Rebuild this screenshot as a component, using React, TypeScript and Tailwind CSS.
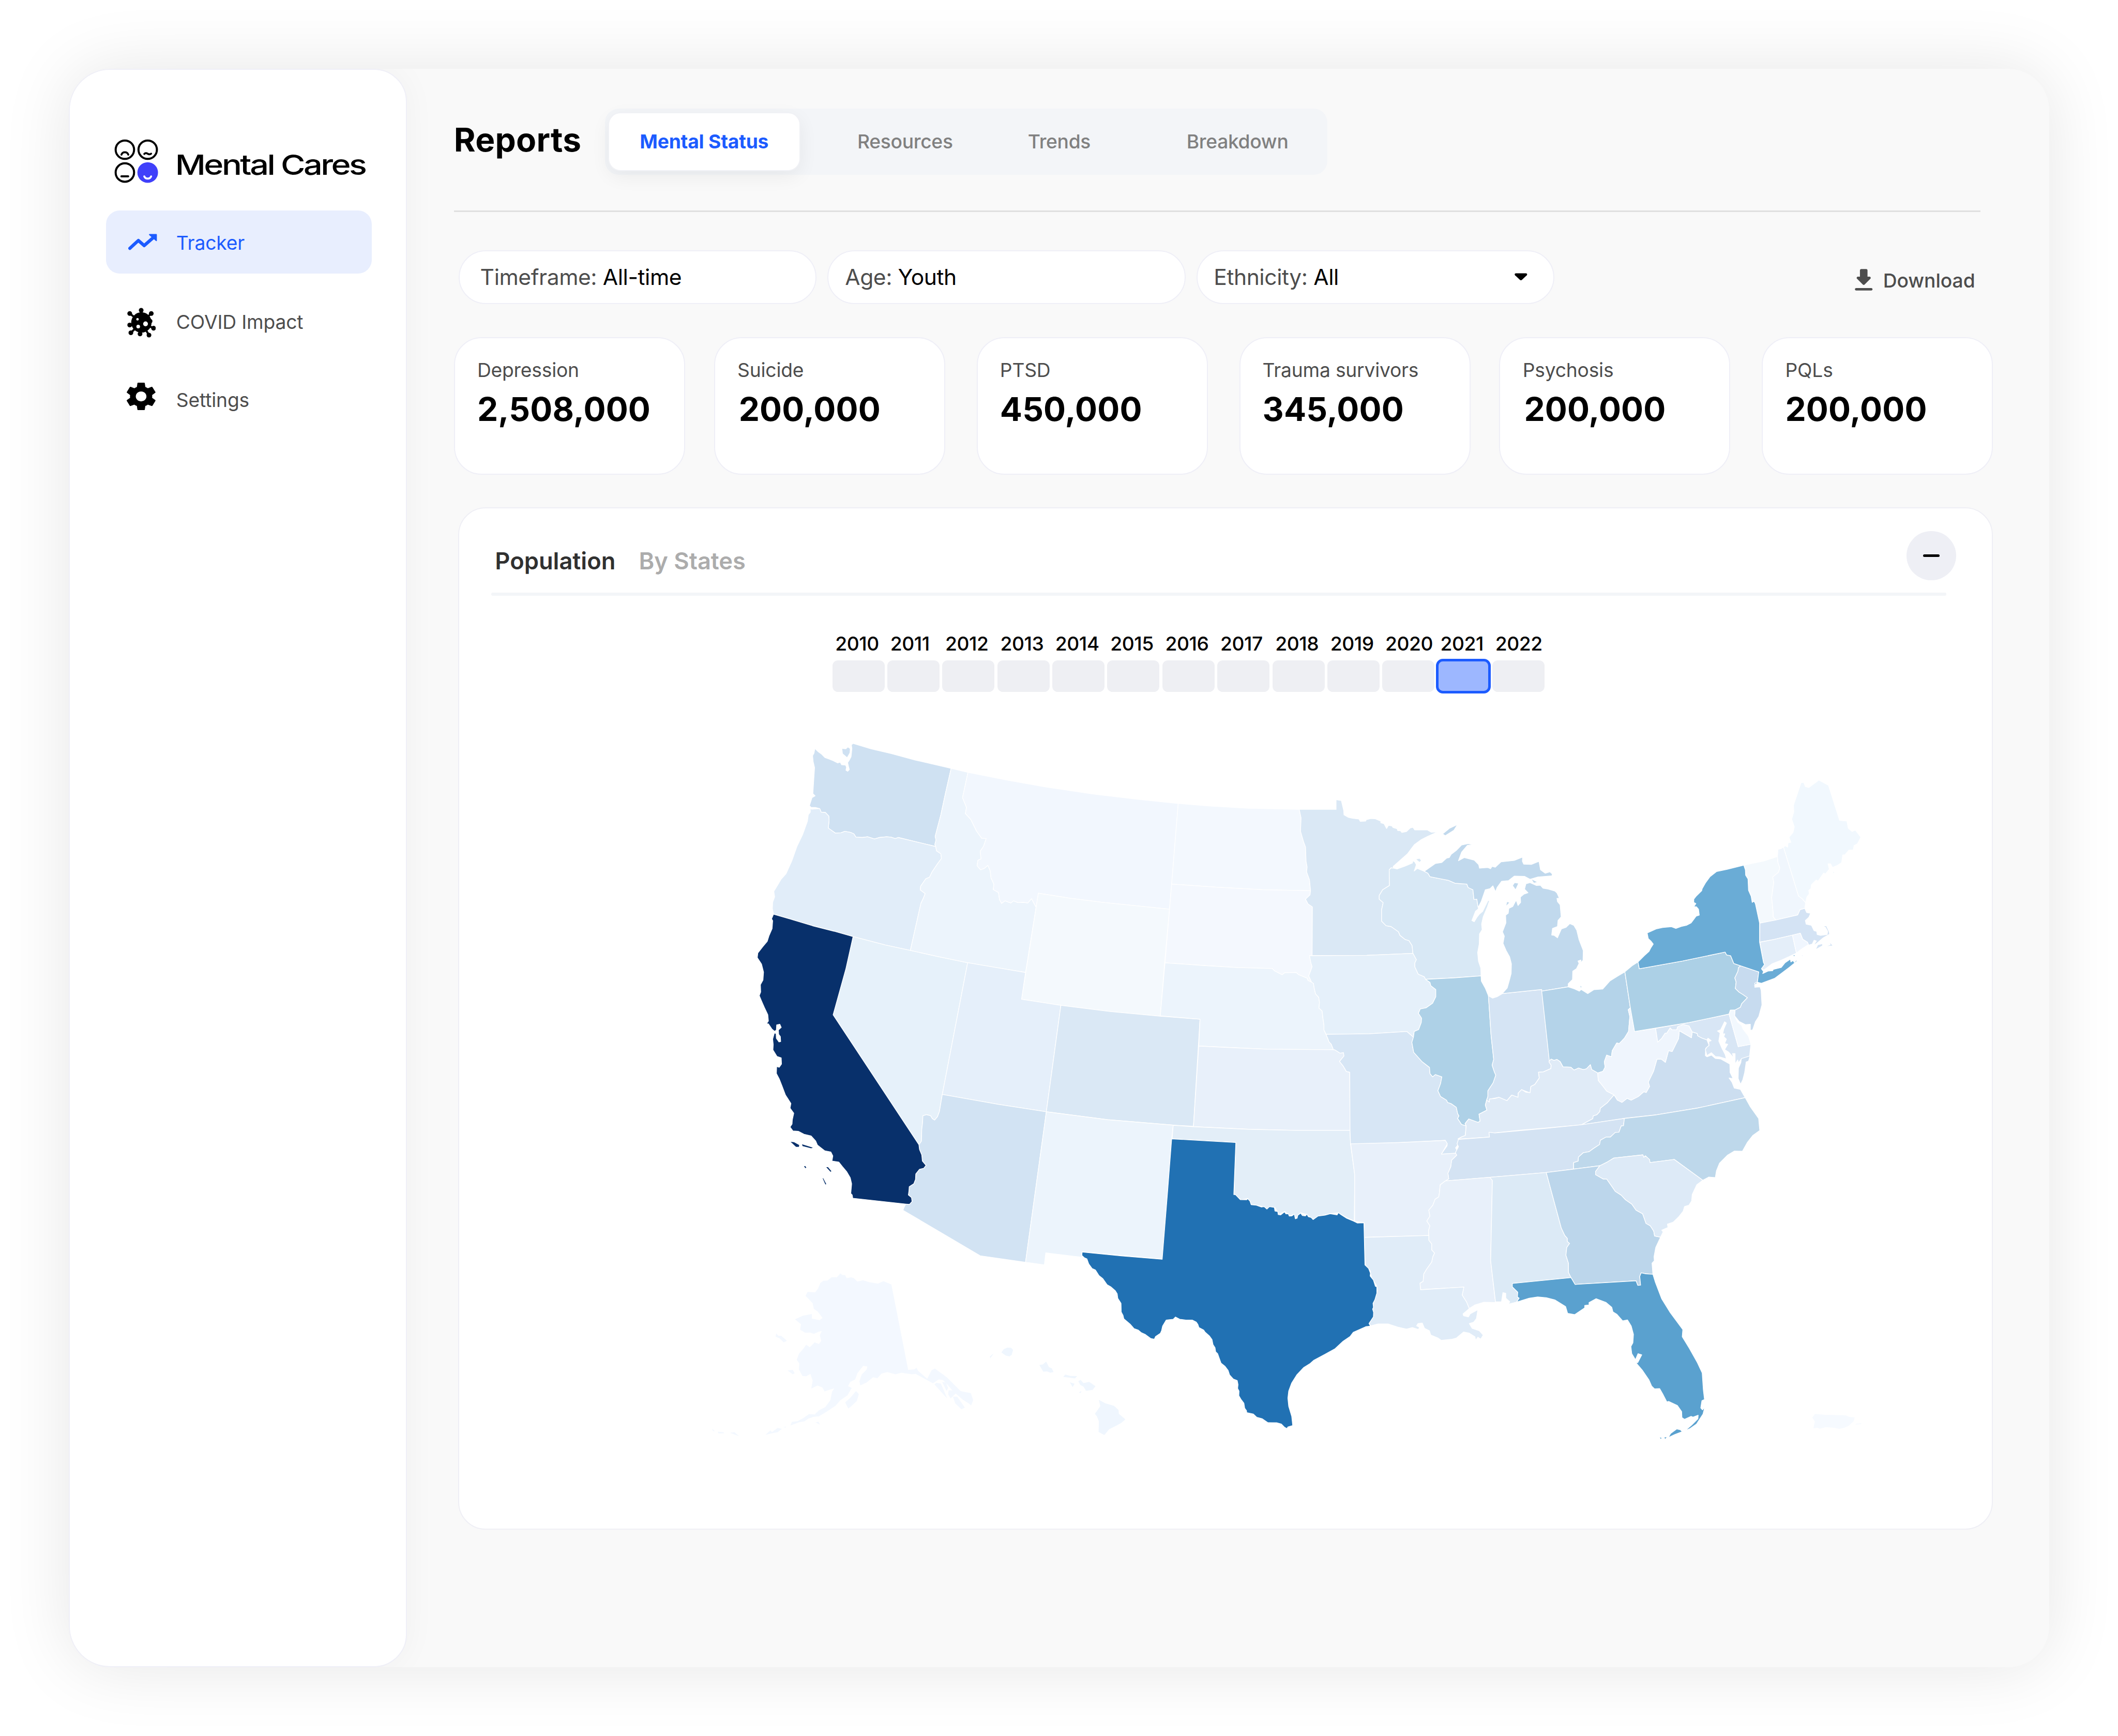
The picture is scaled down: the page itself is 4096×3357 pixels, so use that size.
import React from "react";

type Shape = { fill: string; points: string[] };
type Sheet = { transform: string; shapes: Shape[] };

const reverse = (s: string) => s.trim().split(/\s+/).reverse().join(" ");

/* Shared borders, western sheet */
const waOr =
  "270,238 275,248 290,249 302,259 303,270 300,292 325,306 345,305 358,301 378,304 390,308 397,317 420,318 438,316 462,322 480,318 505,316 520,317 535,321 545,318 677,343";
const orId =
  "677,343 680,355 695,363 697,376 682,392 665,412 655,428 642,432 624,453 623,463 640,473 634,485 625,500 588,630";
const idMt =
  "790,138 771,208 785,235 781,252 800,268 820,300 838,320 854,321 845,342 833,356 836,377 825,381 822,396 834,407 846,404 860,395 868,410 871,430 881,447 879,462 897,470 901,490 908,500 920,493 940,499 950,493 965,498 985,497 1000,499 1013,487 1029,511";
const nvAz =
  "700,1028 690,1075 683,1090 673,1099 665,1095 659,1087 645,1084 632,1087 631,1105 628,1125 627,1157 618,1167";
const caAz =
  "618,1167 620,1180 628,1195 630,1212 643,1224 635,1232 620,1235 607,1248 606,1263 600,1275 584,1283 583,1295 581,1306 592,1313 594,1324 585,1332 572,1331";

/* Shared borders, central sheet */
const ndMn =
  "573,88 580,118 578,165 590,203 597,220 599,270 603,290 601,307 612,335 616,373";
const sdMn = "616,373 614,388 597,403 606,419 623,430 622,601";
const sdNe =
  "63,626 200,635 340,643 470,646 480,655 495,662 508,668 518,661 561,660 571,668 590,675 603,680 606,688 620,694";
const neIa =
  "620,694 627,698 630,715 635,735 647,747 650,765 648,785 660,795 663,820 667,845 667,862 675,877";
const sdIa = "612,601 617,625 622,640 614,660 609,672 620,694";
const mnWi =
  "915,300 916,355 890,370 877,390 877,403 892,415 886,440 886,480 903,496 922,499 950,517 956,530 975,544 990,548 1002,566 1005,593";
const iaWi = "1005,593 1018,615 1012,627 1012,640 1025,666 1048,675 1053,684";
const iaIl =
  "1053,684 1070,695 1073,706 1092,720 1092,745 1080,768 1055,784 1033,788 1026,803 1038,820 1037,835 1027,860 1010,867 1007,887";
const moIl =
  "1007,887 1001,905 1008,940 1040,973 1068,993 1070,1015 1080,1026 1090,1018 1115,1026 1110,1050 1100,1075 1110,1095 1133,1108 1137,1116 1150,1120 1170,1133 1175,1155 1180,1163 1175,1172 1190,1193 1207,1198";
const ilIn =
  "1292,742 1302,880 1312,965 1306,985 1315,1010 1320,1020 1310,1047 1290,1075 1290,1095 1285,1108";
const ksMo = "708,931 728,943 741,941 743,953 726,972 740,988 752,1007 765,1010 766,1214";
const wiUp =
  "1048,305 1062,312 1070,324 1140,337 1165,347 1210,350 1215,362 1233,370 1237,404 1248,403 1252,427";

/* Shared borders, north-eastern sheet */
const ohKy =
  "269,1232 276,1225 287,1230 298,1226 310,1235 321,1257 350,1258 363,1270 380,1262 398,1268 410,1265 425,1248 430,1268 453,1282";
const ohWv =
  "453,1282 473,1275 481,1258 478,1235 487,1208 505,1215 508,1190 525,1158 535,1160 555,1137 570,1110 575,1048 569,1020 577,1012";
const wvKy = "453,1282 455,1313 470,1333 487,1357 515,1373";
const vaKy = "515,1373 490,1405 463,1428 461,1442 450,1455 436,1460 434,1472 391,1497";
const vaWv =
  "515,1373 528,1395 545,1404 565,1387 580,1395 607,1380 628,1360 637,1363 650,1338 645,1320 665,1275 678,1225 695,1225 710,1238 722,1190 736,1193 760,1140 763,1107 809,1136 812,1112";
const mdWv =
  "812,1112 800,1087 778,1081 757,1090 753,1103 735,1103 728,1095 715,1117 709,1117 695,1140 681,1154 673,1097";
const paNj =
  "996,838 988,845 986,860 974,888 979,905 976,932 990,947 1005,957 1022,970 1000,995 995,1010 975,1021";
const nyPa = "606,822 611,850 775,818 937,781 943,793 958,796 970,828 996,838";
const nyVt = "1008,421 1014,440 1015,462 1024,478 1026,525 1036,550 1040,575 1047,570 1052,580 1068,661";
const vtNh =
  "1136,385 1138,410 1145,432 1140,450 1118,470 1122,492 1114,555 1120,620 1120,635 1130,648";
const nhMe = "1159,346 1216,548 1230,560 1243,576";

/* Shared borders, south-eastern sheet */
const tnNc =
  "994,145 991,175 983,176 975,202 962,203 945,222 930,222 910,235 907,253 885,270 870,283 850,287 833,305 832,322 816,328 816,355";
const ncSc =
  "908,341 935,325 957,309 1059,296 1062,306 1068,300 1082,315 1084,328 1169,315 1269,401";
const gaSc =
  "908,341 893,365 893,378 920,396 932,396 945,418 962,447 983,463 998,482 1020,500 1035,525 1058,540 1070,580 1085,590 1097,612 1100,632 1121,637";
const gaAl =
  "720,369 773,600 785,630 794,642 794,655 802,663 792,680 789,712 798,745 798,783 807,805";
const gaFl = "807,805 821,833 1035,818 1041,837 1051,836 1048,800 1053,785 1070,789 1094,791";
const river =
  "366,404 348,420 345,455 343,470 330,480 322,505 308,525 312,550 301,570 312,590 307,610 308,630";
const msLa =
  "308,630 308,650 318,665 318,690 328,703 322,718 318,740 300,770 290,790 288,820 277,828 279,855 431,844 425,877 440,905 450,933";
const tnAr = "402,289 406,297 388,318 385,345 375,372 378,395 366,404";

const sheets: Sheet[] = [
  {
    transform: "translate(2160 2100) scale(0.82908 1.0523)",
    shapes: [
      {
        fill: "#cfe1f2",
        points: [
          `253,72 265,81 277,88 288,97 302,101 318,106 333,112 342,110 347,117 361,118 364,124 362,132 368,135 374,130 371,122 368,111 374,104 380,95 382,80 383,72 381,62 387,58 450,73 520,86 605,104 731,127 710,200 695,255 675,315 678,325 674,337 ${reverse(waOr)} 255,235 240,235 234,230 243,208 254,203 246,197 249,160 252,125 247,108 245,92 250,85`,
          "349,73 362,74 369,69 376,73 375,84 366,96 351,86",
        ],
      },
      {
        fill: "#e1edf9",
        points: [
          `237,237 242,240 ${waOr} ${orId} 500,615 387,592 320,577 245,562 165,543 108,530 104,515 105,497 112,482 109,467 122,450 134,434 152,418 172,383 190,343 210,310 227,273 230,255 237,248`,
        ],
      },
      {
        fill: "#e6f1fa",
        points: [`387,592 500,615 588,630 690,648 789,664 ${nvAz} 317,808`],
      },
      {
        fill: "#ecf4fc",
        points: [
          `731,127 ${idMt} 992,691 890,678 789,664 690,648 ${reverse(orId)} 674,337 678,325 675,315 695,255 710,200`,
        ],
      },
      {
        fill: "#f2f7fe",
        points: [
          `790,138 930,160 1060,178 1230,198 1380,212 1528,224 1505,447 1497,516 1270,498 1150,486 1037,472 ${reverse(idMt)}`,
        ],
      },
      {
        fill: "#f4f9fd",
        points: ["1037,472 1150,486 1270,498 1497,516 1480,663 1465,812 1290,799 1116,782 978,765"],
      },
      { fill: "#e5effa", points: ["789,664 992,691 978,765 1116,782 1065,1076 900,1056 700,1028"] },
      {
        fill: "#dae8f5",
        points: ["1116,782 1290,799 1465,812 1604,820 1581,1116 1510,1113 1280,1098 1065,1076"],
      },
      {
        fill: "#d2e3f3",
        points: [
          `700,1028 900,1056 1065,1076 992,1492 833,1474 700,1412 562,1348 566,1340 ${reverse(caAz)} ${reverse(nvAz)}`,
        ],
      },
      {
        fill: "#ecf4fc",
        points: ["1065,1076 1280,1098 1510,1113 1505,1150 1472,1483 1190,1463 1190,1478 1063,1466 1058,1499 992,1492"],
      },
      {
        fill: "#08306b",
        points: [
          `108,530 165,543 245,562 320,577 387,592 362,680 317,808 ${caAz} 386,1315 384,1306 379,1302 382,1275 377,1258 365,1242 350,1228 337,1215 313,1212 316,1198 309,1187 288,1184 262,1168 256,1157 240,1143 215,1138 195,1130 176,1129 166,1118 173,1110 174,1098 179,1080 166,1066 169,1053 150,1030 138,1005 128,985 118,970 119,951 128,953 136,944 135,927 120,923 106,905 107,890 105,875 111,858 117,860 118,873 127,883 133,882 132,868 126,862 125,850 135,843 130,834 119,836 118,850 112,854 102,847 90,833 83,833 90,825 88,808 76,788 66,770 58,755 63,745 62,725 71,712 73,690 66,668 51,650 53,637 70,620 86,605 92,590 103,570 105,548 101,543`,
          "168,1159 180,1160 198,1168 197,1173 187,1173",
          "208,1166 246,1175 240,1177 210,1171",
          "215,1227 219,1226 223,1230 220,1232",
          "293,1229 299,1229 311,1240 308,1242",
          "280,1259 283,1261 293,1276 290,1277",
        ],
      },
    ],
  },
  {
    transform: "translate(3340 2280) scale(0.76531 0.82908)",
    shapes: [
      { fill: "#f3f8fe", points: [`113,67 230,76 380,84 ${ndMn} 440,370 260,361 88,350`] },
      {
        fill: "#f4f8fe",
        points: [`88,350 260,361 440,370 ${sdMn} ${sdIa} ${reverse(sdNe)}`],
      },
      {
        fill: "#ecf4fc",
        points: [
          `${sdNe} ${neIa} 683,895 686,903 695,912 703,931 450,929 300,923 191,918 196,824 45,812`,
        ],
      },
      {
        fill: "#e8f0fa",
        points: [`191,918 300,923 450,929 ${ksMo} 560,1214 380,1210 171,1201`],
      },
      {
        fill: "#e3eef8",
        points: [
          "94,1196 171,1201 380,1210 560,1214 766,1214 768,1262 784,1370 782,1532 755,1521 721,1503 690,1506 650,1515 624,1526 600,1508 578,1503 560,1524 553,1508 537,1514 518,1498 495,1509 481,1484 450,1490 430,1480 390,1474 378,1453 352,1457 325,1439 332,1256 90,1244",
        ],
      },
      {
        fill: "#dae8f5",
        points: [
          `${ndMn} ${sdMn} 830,600 ${reverse(mnWi)} 922,293 932,297 930,288 985,243 1010,212 1035,195 1060,183 1098,167 1075,168 1060,160 1012,160 1005,151 995,153 980,166 963,169 958,163 947,162 945,156 930,152 925,146 912,144 905,155 895,138 883,135 883,129 862,121 845,120 828,124 825,129 805,130 800,122 775,119 760,116 743,107 742,92 733,57 713,54 713,88`,
        ],
      },
      {
        fill: "#d8e8f5",
        points: [
          `${mnWi} ${iaWi} 1160,679 1264,672 1263,645 1254,620 1251,590 1257,560 1258,525 1268,510 1266,490 1272,465 1288,430 1297,406 1290,408 1270,446 1258,455 1250,464 1238,482 1229,478 1243,445 1254,437 ${reverse(wiUp)} 1022,295 1010,304 1018,282 1012,272 1005,268 1003,276 975,287 945,297 932,294 922,293`,
          "1018,263 1030,261 1036,267 1030,272",
        ],
      },
      {
        fill: "#e5f0fa",
        points: [`${reverse(sdIa)} 830,600 ${iaWi} ${iaIl} 982,867 840,875 ${reverse(neIa)}`],
      },
      {
        fill: "#d7e6f5",
        points: [
          `675,877 840,875 982,867 ${moIl} 1204,1232 1190,1237 1177,1243 1180,1260 1167,1275 1173,1284 1167,1295 1113,1297 1135,1268 1135,1260 1128,1249 960,1257 768,1262 ${reverse(ksMo)} 703,931 695,912 686,903 683,895`,
        ],
      },
      {
        fill: "#aed1e7",
        points: [
          `1053,684 1160,679 1264,672 1265,690 1280,715 ${ilIn} 1280,1125 1286,1143 1256,1157 1260,1182 1252,1186 1217,1174 1203,1190 ${reverse(moIl)} ${reverse(iaIl)}`,
        ],
      },
      {
        fill: "#d5e4f4",
        points: [
          `${ilIn} 1295,1115 1296,1104 1332,1098 1362,1110 1380,1090 1404,1098 1405,1083 1418,1071 1450,1082 1453,1060 1468,1053 1485,1030 1482,1010 1500,1009 1529,997 1530,985 1522,973 1524,968 1510,850 1495,720 1345,734 1325,745 1308,750`,
        ],
      },
      {
        fill: "#c1d9ed",
        points: [
          `${wiUp} 1254,430 1265,410 1280,370 1298,366 1309,356 1319,377 1325,362 1342,340 1368,338 1390,322 1430,323 1450,333 1480,325 1533,321 1535,315 1526,307 1508,312 1490,300 1484,270 1455,281 1426,280 1421,270 1422,255 1390,267 1340,272 1318,291 1306,288 1300,296 1290,292 1258,294 1255,282 1238,266 1200,257 1178,268 1190,238 1212,214 1235,212 1215,208 1190,213 1170,232 1150,246 1143,257 1133,259 1115,274 1090,278`,
          "1120,174 1145,155 1171,144 1160,160 1128,179",
          "1385,355 1392,346 1405,348 1395,368",
          "1360,425 1363,413 1371,415",
          "1457,334 1476,343 1465,345",
        ],
      },
    ],
  },
  {
    transform: "translate(4300 2220) scale(0.76531 0.70153)",
    shapes: [
      {
        fill: "#c1d9ed",
        points: [
          "90,953 109,930 118,895 124,870 125,830 118,800 105,775 93,745 98,715 91,697 104,660 103,628 113,620 115,600 130,592 143,565 150,588 160,575 159,553 172,541 188,535 175,520 180,498 195,493 220,505 235,504 245,516 265,520 290,528 298,536 307,558 298,558 300,572 310,585 314,635 302,650 300,675 281,683 278,710 288,712 300,722 315,685 333,678 347,663 362,670 373,690 382,730 398,775 397,815 388,825 389,814 378,818 382,828 372,850 358,860 357,895 341,912 341,925 240,943 240,936",
        ],
      },
      {
        fill: "#b4d3e9",
        points: [
          `240,943 341,925 365,934 383,943 390,936 415,953 438,937 472,934 500,900 530,880 556,863 ${reverse(ohWv)} ${reverse(ohKy)} 255,1090`,
          "387,921 391,924 389,929",
        ],
      },
      {
        fill: "#e0ebf7",
        points: [
          `${ohKy} ${wvKy} ${vaKy} 270,1509 160,1519 57,1531 40,1528 42,1548 -77,1556 -64,1547 -50,1541 -47,1501 -51,1492 -37,1473 -2,1487 6,1482 2,1453 32,1436 26,1415 31,1395 41,1403 42,1390 62,1388 78,1383 108,1397 126,1374 150,1383 151,1365 164,1351 180,1362 196,1364 199,1338 214,1330 231,1303 228,1279 246,1278 275,1264 276,1250 268,1237`,
        ],
      },
      {
        fill: "#ccdef0",
        points: [
          `${vaWv} 831,1118 833,1128 848,1137 868,1145 876,1168 863,1180 862,1210 868,1215 885,1208 900,1222 920,1224 955,1245 956,1280 967,1305 952,1303 963,1320 972,1345 995,1350 1013,1384 850,1424 680,1455 555,1470 530,1475 391,1497 ${reverse(vaKy)}`,
          "1000,1222 1030,1212 1025,1232 1016,1235 1010,1280 1003,1310 996,1326 988,1305 989,1262 998,1240",
        ],
      },
      {
        fill: "#eff5fd",
        points: [`577,1012 593,1110 673,1097 ${reverse(mdWv)} ${reverse(vaWv)} ${reverse(wvKy)} ${ohWv}`],
      },
      {
        fill: "#d8e6f5",
        points: [
          `673,1097 800,1073 952,1038 987,1173 1035,1163 1030,1212 1000,1222 988,1240 985,1228 975,1245 975,1202 965,1202 970,1220 950,1195 935,1185 947,1163 935,1160 942,1142 932,1132 936,1120 928,1120 932,1100 942,1075 935,1070 920,1103 908,1108 918,1116 913,1150 925,1180 937,1205 942,1224 915,1215 900,1214 885,1198 868,1210 862,1185 868,1175 876,1168 875,1152 884,1148 872,1138 868,1145 848,1137 833,1128 831,1118 ${mdWv}`,
        ],
      },
      {
        fill: "#acd0e6",
        points: [`556,863 583,838 ${nyPa} ${paNj} 957,1022 952,1038 800,1073 593,1110 577,1012`],
      },
      {
        fill: "#c7dbef",
        points: [
          `1065,863 1060,905 1050,910 1050,927 1070,925 1074,940 1077,1000 1065,1048 1052,1070 1042,1103 1033,1106 1033,1080 1015,1082 990,1068 973,1045 ${reverse(paNj)}`,
        ],
      },
      {
        fill: "#f2f8fe",
        points: ["952,1038 957,1022 975,1021 973,1045 985,1072 1000,1085 1005,1100 1026,1130 1035,1163 987,1173"],
      },
      { fill: "#f4f9fd", points: [`${nyVt} ${reverse(vtNh)} 1085,403`] },
      {
        fill: "#f0f6fd",
        points: [`${vtNh} 1213,627 1222,605 1240,600 ${reverse(nhMe)} 1148,353 1138,355`],
      },
      {
        fill: "#f1f8fe",
        points: [
          `${nhMe} 1248,552 1257,540 1255,525 1263,518 1265,502 1283,482 1290,487 1312,453 1318,458 1333,437 1328,415 1338,415 1345,430 1363,422 1380,410 1384,378 1392,378 1408,358 1424,357 1427,340 1440,332 1453,305 1432,275 1420,281 1405,268 1400,238 1372,235 1330,90 1293,68 1285,75 1255,99 1242,95 1236,78 1226,78 1197,172 1198,200 1190,230 1200,262 1195,285 1180,305 1187,326 1176,328 1175,346 1165,340`,
          "1347,450 1351,448 1350,455",
        ],
      },
      {
        fill: "#d4e3f4",
        points: [
          "1069,661 1130,648 1213,627 1222,605 1240,600 1247,617 1262,620 1255,637 1242,650 1245,665 1265,670 1275,692 1285,695 1287,708 1300,712 1325,708 1327,695 1318,678 1307,672 1322,672 1332,695 1337,722 1332,708 1310,722 1285,745 1272,755 1284,735 1275,732 1268,748 1254,752 1250,740 1232,728 1223,703 1193,711 1125,728 1068,740",
          "1283,768 1290,752 1306,748 1306,754",
          "1325,756 1338,752 1336,744 1345,754",
        ],
      },
      {
        fill: "#e4eef9",
        points: ["1069,740 1117,730 1193,711 1208,785 1180,800 1150,815 1115,830 1085,855 1075,850 1087,832 1083,825"],
      },
      {
        fill: "#f0f6fe",
        points: [
          "1193,711 1223,703 1232,728 1250,740 1254,750 1235,763 1225,770 1208,785",
          "1228,794 1232,793 1232,799",
        ],
      },
      {
        fill: "#6aacd6",
        points: [
          `${nyPa} 1065,863 1060,905 1052,908 1049,921 1060,906 1075,910 1100,900 1125,890 1150,870 1180,845 1211,818 1208,814 1200,824 1195,816 1187,822 1185,810 1165,825 1150,845 1120,853 1118,858 1100,860 1080,870 1083,862 1075,850 1087,832 1083,825 1068,740 ${reverse(nyVt)} 945,438 905,447 880,468 862,495 850,518 848,527 828,548 818,562 818,575 826,580 818,593 828,593 836,603 839,628 827,632 808,660 790,670 770,675 750,683 733,676 700,679 675,685 641,702 645,725 655,735 664,748 654,765 648,778 630,796`,
          "1196,795 1202,794 1200,798",
        ],
      },
    ],
  },
  {
    transform: "translate(3900 3150) scale(0.82908 0.70153)",
    shapes: [
      {
        fill: "#d4e3f3",
        points: [
          `412,232 521,222 519,202 540,205 720,186 845,171 975,148 ${tnNc} 720,369 522,389 ${reverse(tnAr)} 402,285 412,262 407,250`,
        ],
      },
      {
        fill: "#bed8eb",
        points: [
          `${reverse(tnNc)} 1100,131 1250,102 1418,59 1435,95 1465,145 1469,195 1445,215 1425,245 1408,281 1380,280 1355,298 1328,330 1317,362 1313,390 1290,388 ${reverse(ncSc)}`,
        ],
      },
      {
        fill: "#e8f0fa",
        points: [`34,250 200,245 366,236 373,250 352,293 ${tnAr} ${river} 82,638 81,577 48,571 48,378`],
      },
      {
        fill: "#e8f0fa",
        points: [
          `${reverse(river)} 522,389 531,402 525,735 542,908 500,907 470,918 ${reverse(msLa)}`,
        ],
      },
      {
        fill: "#dceaf6",
        points: [
          `522,389 ${gaAl} 601,829 601,843 620,865 619,885 625,890 616,906 587,915 592,905 578,890 578,870 568,867 563,905 542,905 525,735 531,402`,
        ],
      },
      {
        fill: "#bcd6eb",
        points: [
          `816,355 ${gaSc} 1104,680 1098,718 1099,735 1091,745 ${reverse(gaFl)} ${reverse(gaAl)}`,
        ],
      },
      {
        fill: "#ddeaf7",
        points: [
          `${ncSc} 1248,420 1232,460 1230,487 1220,505 1205,510 1200,530 1185,552 1165,575 1145,583 1147,597 1125,608 1130,615 ${reverse(gaSc)}`,
        ],
      },
      {
        fill: "#e0ecf8",
        points: [
          `82,638 ${msLa} 428,955 430,963 447,968 453,955 480,938 475,975 465,990 450,995 460,1015 485,1025 499,1043 490,1060 480,1052 472,1065 470,1050 450,1035 430,1030 405,1055 390,1060 352,1065 340,1055 315,1043 310,1025 293,1015 285,993 270,995 265,1005 275,1010 272,1020 250,1012 230,1018 200,1010 165,997 130,997 104,1005 98,995 115,962 111,935 113,912 127,860 125,838 107,805 102,775 85,752`,
        ],
      },
      {
        fill: "#5aa1cf",
        points: [
          `${gaFl} 1103,825 1125,893 1155,950 1199,1020 1197,1050 1222,1098 1250,1157 1267,1200 1271,1270 1275,1310 1266,1315 1262,1345 1268,1353 1276,1342 1270,1370 1247,1412 1225,1430 1206,1440 1230,1416 1252,1390 1253,1375 1235,1383 1228,1380 1205,1392 1196,1385 1195,1360 1180,1335 1150,1318 1143,1320 1130,1290 1118,1265 1100,1266 1090,1255 1080,1228 1058,1190 1035,1158 1041,1157 1055,1125 1042,1120 1033,1145 1020,1120 1017,1090 1024,1075 1026,1040 1018,1005 1005,980 988,984 968,957 954,947 950,928 930,908 895,892 870,908 870,918 855,920 855,930 820,958 795,953 788,925 750,897 720,888 690,885 660,890 616,906 625,890 619,885 620,865 601,843 601,829`,
          "1151,1465 1157,1452 1178,1434 1190,1437 1195,1443 1170,1454",
          "1134,1468 1142,1466 1138,1473",
          "1119,1467 1125,1470 1121,1473",
        ],
      },
    ],
  },
  {
    transform: "translate(3120 3270) scale(0.58673)",
    shapes: [
      {
        fill: "#2171b3",
        points: [
          "46,631 240,650 443,667 470,330 490,70 650,79 808,88 798,346 806,346 830,371 862,372 866,366 878,378 884,396 910,399 935,408 948,406 962,418 975,406 999,410 1002,428 1016,430 1018,445 1030,447 1050,431 1056,442 1068,441 1073,453 1086,452 1098,443 1103,466 1112,463 1115,449 1129,438 1138,450 1153,452 1160,443 1168,456 1182,460 1191,470 1215,453 1250,448 1276,441 1310,447 1316,436 1330,446 1358,464 1392,478 1410,487 1443,486 1448,695 1466,712 1475,735 1474,750 1490,770 1500,801 1507,803 1507,835 1497,868 1488,885 1490,905 1486,914 1491,930 1490,952 1468,985 1475,998 1452,1001 1390,1029 1375,1049 1340,1073 1300,1110 1250,1138 1195,1167 1177,1183 1145,1203 1110,1240 1085,1280 1070,1320 1066,1355 1070,1395 1085,1445 1090,1491 1066,1498 1062,1506 1050,1500 1033,1483 1010,1477 966,1476 938,1457 912,1450 895,1434 862,1427 861,1417 852,1405 848,1380 833,1360 823,1343 824,1320 817,1307 819,1288 815,1268 795,1260 777,1240 770,1218 755,1198 735,1182 725,1155 718,1135 708,1125 705,1105 695,1090 690,1065 678,1048 655,1027 648,1017 625,1005 620,990 612,978 592,968 560,968 530,964 509,953 498,964 463,968 445,998 440,1020 434,1034 410,1050 404,1063 387,1060 360,1040 340,1031 325,1018 303,1010 284,988 253,962 249,945 240,928 239,885 223,860 220,838 210,822 188,803 170,793 148,762 130,748 112,720 95,712 79,690 70,665 58,660 45,648",
        ],
      },
    ],
  },
  {
    transform: "translate(2050 3650) scale(0.82908 0.35714)",
    shapes: [
      {
        fill: "#eff6fe",
        points: [
          "1040,790 1048,765 1060,751 1074,752 1081,770 1076,810 1068,823 1055,815",
          "1001,838 1000,823 1013,797",
          "1173,892 1185,888 1197,865 1207,910 1217,920 1223,950 1212,955 1200,945 1187,947",
          "1257,990 1264,970 1282,982 1306,983 1298,1002 1280,995",
          "1280,1033 1297,1045 1290,1072",
          "1310,1025 1318,1014 1328,1040 1348,1030 1370,1065 1360,1095 1337,1103 1328,1068 1317,1055",
          "1311,1118 1320,1104 1319,1119",
          "1382,1176 1405,1205 1435,1225 1451,1260 1452,1290 1475,1335 1460,1365 1442,1388 1418,1415 1401,1463 1381,1437 1382,1350 1375,1310 1368,1290 1387,1228",
        ],
      },
      {
        fill: "#f3f8ff",
        points: [
          "475,147 483,160 492,160 497,185 512,178 522,185 535,213 555,203 575,217 607,230 626,210 654,236 713,932 735,928 742,915 748,940 780,1005 795,935 807,922 850,995 897,1105 933,1122 941,1180 934,1222 925,1205 905,1175 885,1135 872,1110 850,1050 835,1015 820,1010 800,1042 775,1010 740,965 725,968 690,955 668,968 640,950 620,962 605,1000 590,992 567,1035 545,1058 542,1025 550,970 567,930 570,905 555,900 535,960 527,1010 510,1030 502,1065 515,1080 500,1140 475,1180 458,1225 425,1275 400,1310 380,1315 362,1330 350,1350 330,1360 300,1385 305,1355 325,1350 345,1325 365,1292 385,1295 400,1262 422,1235 440,1180 446,1110 454,1083 435,1095 420,1108 412,1075 395,1060 373,1085 378,1020 370,965 355,985 342,982 330,930 331,880 322,850 330,800 345,760 355,728 368,748 385,708 400,722 408,695 403,650 410,615 400,620 382,638 368,628 352,630 334,605 337,560 316,520 345,490 375,477 375,515 402,527 413,510 395,455 382,435 378,390 362,350 353,330 360,297 387,300 397,270 405,225 415,207 430,205 445,177 463,178",
          "503,1247 492,1197 510,1160 530,1105 540,1130 533,1185 515,1225",
          "805,1050 812,1037 828,1045 850,1165 838,1135",
          "832,1030 845,1035 853,1080 848,1105",
          "855,1098 870,1100 882,1120 862,1165 853,1130",
          "870,1150 885,1150 912,1240 900,1253 878,1205",
          "250,635 258,655 268,655 288,695 276,708 262,675 248,662",
          "290,937 308,932 315,960 308,968",
          "212,1462 230,1425 235,1440 255,1405 270,1412 255,1440 238,1447",
          "275,1400 285,1393 283,1402",
          "45,1435 65,1440 68,1448 48,1450",
          "88,1445 103,1438 120,1472 105,1460",
          "25,1410 35,1432 28,1430",
          "388,1360 398,1355 404,1378",
        ],
      },
    ],
  },
  {
    transform: "translate(5220 4060) scale(0.59949 0.6301)",
    shapes: [
      {
        fill: "#f6faff",
        points: [
          "84,98 98,81 150,85 245,87 265,95 290,97 285,115 262,135 240,145 215,150 190,145 150,142 120,149 110,145 90,147 97,115",
          "292,130 300,126 325,124 320,128",
        ],
      },
    ],
  },
];

function UsMap() {
  return (
    <svg className="ml-[166.4px] mt-[21.3px] h-[537.5px] w-[875px] shrink-0" viewBox="2000 2100 3500 2150">
      {sheets.map((sheet, i) => (
        <g key={i} transform={sheet.transform}>
          {sheet.shapes.map((shape, j) =>
            shape.points.map((p, k) => (
              <polygon
                key={`${j}-${k}`}
                points={p}
                fill={shape.fill}
                stroke="#fff"
                strokeWidth={k === 0 && i < 5 ? 0.5 : 0}
                strokeLinejoin="round"
                vectorEffect="non-scaling-stroke"
              />
            ))
          )}
        </g>
      ))}
    </svg>
  );
}

function LogoMark() {
  return (
    <svg className="h-8 w-8 shrink-0" viewBox="0 0 32 32" fill="none" strokeLinecap="round">
      <circle cx="7.7" cy="7.7" r="6.7" stroke="#000" strokeWidth="1.5" />
      <circle cx="24.3" cy="7.7" r="6.7" stroke="#000" strokeWidth="1.5" />
      <circle cx="7.7" cy="24.3" r="6.7" stroke="#000" strokeWidth="1.5" />
      <circle cx="24.3" cy="24.3" r="7.5" fill="#4040fa" />
      <path d="M5.2 11.3c.9-2.3 4.1-2.3 5 0" stroke="#000" strokeWidth="1.4" />
      <path d="M21.8 10.8c.8-.9 1.6-.7 2.4-.2s1.7.8 2.6 0" stroke="#000" strokeWidth="1.4" />
      <path d="M5.2 27.1h4.9" stroke="#000" strokeWidth="1.5" />
      <path d="M21.8 27.1c.9 2.2 4.1 2.2 5 0" stroke="#fff" strokeWidth="1.4" />
    </svg>
  );
}

function TrendIcon() {
  return (
    <svg className="h-[12px] w-[21px]" viewBox="256 739 125 71">
      <path
        d="M263 802L300 768L325 790L366 754"
        fill="none"
        stroke="#1c5bff"
        strokeWidth="14"
        strokeLinecap="round"
        strokeLinejoin="round"
      />
      <path d="M348 740H377Q380 740 380 743V769Q379 772 376 770L346 744Q345 740 348 740Z" fill="#1c5bff" />
    </svg>
  );
}

const knobs = [
  [311, 1067],
  [355, 1081],
  [261, 1081],
  [261, 1131],
  [266, 1165],
  [306, 1170],
  [345, 1175],
  [365, 1145],
];

function VirusIcon() {
  return (
    <svg className="h-[22px] w-[21px]" viewBox="250 1056 126 131">
      {knobs.map(([x, y]) => (
        <g key={`${x}-${y}`}>
          <line x1="312" y1="1120" x2={x} y2={y} stroke="#000" strokeWidth="9" />
          <circle cx={x} cy={y} r="10.3" />
        </g>
      ))}
      <circle cx="312" cy="1120" r="44.5" />
      <circle cx="351" cy="1114" r="9" />
      <circle cx="295" cy="1106" r="5.5" fill="#fff" />
      <circle cx="330" cy="1126" r="10.5" fill="#fff" />
      <circle cx="298" cy="1138" r="8" fill="#fff" />
    </svg>
  );
}

function GearIcon() {
  return (
    <svg className="h-[20px] w-[21px]" viewBox="2.66 2.4 18.7 19.2" preserveAspectRatio="none">
      <path d="M19.14 12.94c.04-.3.06-.61.06-.94 0-.32-.02-.64-.07-.94l2.03-1.58c.18-.14.23-.41.12-.61l-1.92-3.32c-.12-.22-.37-.29-.59-.22l-2.39.96c-.5-.38-1.03-.7-1.62-.94l-.36-2.54c-.04-.24-.24-.41-.48-.41h-3.84c-.24 0-.43.17-.47.41l-.36 2.54c-.59.24-1.13.57-1.62.94l-2.39-.96c-.22-.08-.47 0-.59.22L2.74 8.87c-.12.21-.08.47.12.61l2.03 1.58c-.05.3-.09.63-.09.94s.02.64.07.94l-2.03 1.58c-.18.14-.23.41-.12.61l1.92 3.32c.12.22.37.29.59.22l2.39-.96c.5.38 1.03.7 1.62.94l.36 2.54c.05.24.24.41.48.41h3.84c.24 0 .44-.17.47-.41l.36-2.54c.59-.24 1.13-.56 1.62-.94l2.39.96c.22.08.47 0 .59-.22l1.92-3.32c.12-.22.07-.47-.12-.61l-2.01-1.58zM12 15.45c-1.98 0-3.45-1.55-3.45-3.45s1.47-3.45 3.45-3.45 3.45 1.55 3.45 3.45-1.47 3.45-3.45 3.45z" />
    </svg>
  );
}

function Sidebar() {
  return (
    <aside className="flex w-[246px] shrink-0 flex-col rounded-l-[30px] rounded-r-[24px] border border-[#efeff7] bg-white px-[26px] shadow-[0_0_24px_rgba(0,0,0,0.04)]">
      <div className="mt-[50.3px] flex h-8 pl-[6.4px]">
        <LogoMark />
        <svg className="ml-[12px] h-8 w-[141px]" viewBox="0 0 141 32">
          <text
            x="0.3"
            y="26"
            textLength="138.2"
            lengthAdjust="spacingAndGlyphs"
            fontFamily="Inter, sans-serif"
            fontSize="20.3"
            fontWeight="500"
            letterSpacing="-1.1"
          >
            Mental Cares
          </text>
        </svg>
      </div>
      <nav className="ml-[0.4px] mt-5 flex flex-col gap-[11px] text-sm tracking-[-0.06px] text-[#4d4d4d]">
        <a className="flex h-[46px] w-[193px] items-center rounded-[10px] bg-[#e8eefe] pl-[16px] text-[#1c5bff]">
          <TrendIcon />
          <span className="ml-[14px] mt-[1px]">Tracker</span>
        </a>
        <a className="flex h-[46px] w-[193px] items-center pl-[15.2px]">
          <span className="mt-[3px]">
            <VirusIcon />
          </span>
          <span className="ml-[14.8px] mt-[2px]">COVID Impact</span>
        </a>
        <a className="flex h-[46px] w-[193px] items-center pl-[15px]">
          <span className="-mt-[4px]">
            <GearIcon />
          </span>
          <span className="ml-[15px] mt-[2px]">Settings</span>
        </a>
      </nav>
    </aside>
  );
}

function Header() {
  return (
    <header className="flex h-12 items-center">
      <h1 className="w-[110px] pb-[3px] text-2xl font-bold tracking-[0.12px]">Reports</h1>
      <div className="flex h-12 w-[525px] items-center rounded-[10px] bg-[#f3f5f8] text-sm font-medium tracking-[-0.12px] text-[#808080]">
        <span className="ml-[2px] flex h-[43px] w-[140px] items-center justify-center rounded-[9px] border border-[#f0f1f5] bg-white font-bold tracking-[-0.08px] text-[#1c5bff] shadow-[0_4px_14px_rgba(0,0,0,0.06)]">
          Mental Status
        </span>
        <span className="ml-[41.4px] w-[124px]">Resources</span>
        <span className="w-[115.4px]">Trends</span>
        <span>Breakdown</span>
      </div>
    </header>
  );
}

function Filters() {
  return (
    <div className="ml-[3.4px] mt-7 flex h-[39px] w-[1113px] items-center gap-2 text-base tracking-[-0.16px] text-[#4d4d4d]">
      <div className="flex h-[39px] w-[260.3px] items-center rounded-[20px] border border-[#efeff7] bg-white pl-[15px]">
        <span>Timeframe:&nbsp;</span>
        <span className="text-black">All-time</span>
      </div>
      <div className="flex h-[39px] w-[260.3px] items-center rounded-[20px] border border-[#efeff7] bg-white pl-[12px]">
        <span>Age:&nbsp;</span>
        <span className="text-black">Youth</span>
      </div>
      <div className="flex h-[39px] w-[260.3px] items-center rounded-[20px] border border-[#efeff7] bg-white pl-[11.8px]">
        <span>Ethnicity:&nbsp;</span>
        <span className="text-black">All</span>
        <svg className="ml-auto mr-[18.5px] h-[6px] w-[10px]" viewBox="0 0 10 6">
          <path d="M1.3 .2H8.7Q10 .5 9.3 1.6L5.7 5Q5 5.6 4.3 5L.7 1.6Q0 .5 1.3 .2Z" />
        </svg>
      </div>
      <button className="ml-auto mr-[10.3px] mt-[5px] flex items-center text-sm font-medium tracking-[-0.02px]">
        <svg className="h-[22px] w-[22px]" viewBox="0 0 24 24" fill="#4d4d4d">
          <path d="M16.59 9H15V4c0-.55-.45-1-1-1h-4c-.55 0-1 .45-1 1v5H7.41c-.89 0-1.34 1.08-.71 1.71l4.59 4.59c.39.39 1.02.39 1.41 0l4.59-4.59c.63-.63.19-1.71-.7-1.71zM5 19c0 .55.45 1 1 1h12c.55 0 1-.45 1-1s-.45-1-1-1H6c-.55 0-1 .45-1 1z" />
        </svg>
        <span className="ml-[3px]">Download</span>
      </button>
    </div>
  );
}

const stats = [
  { label: "Depression", value: "2,508,000", box: "pl-[16px]", num: "" },
  { label: "Suicide", value: "200,000", box: "ml-[21px] pl-[16.2px]", num: "pl-[1px]" },
  { label: "PTSD", value: "450,000", box: "ml-[23px] pl-[16.1px]", num: "" },
  { label: "Trauma survivors", value: "345,000", box: "ml-[23px] pl-[16px]", num: "" },
  { label: "Psychosis", value: "200,000", box: "ml-[20.7px] pl-[16.5px]", num: "pl-[1px]" },
  { label: "PQLs", value: "200,000", box: "ml-[23px] pl-[16.4px]", num: "" },
];

function Stats() {
  return (
    <div className="ml-[0.25px] mt-6 flex">
      {stats.map((s) => (
        <div
          key={s.label}
          className={`h-[100px] w-[168px] shrink-0 rounded-[20px] border border-[#efeff7] bg-white pt-[13.4px] ${s.box}`}
        >
          <div className="text-sm leading-5 tracking-[-0.08px] text-[#4d4d4d]">{s.label}</div>
          <div className={`mt-[2px] text-2xl font-bold leading-[32px] tracking-[0.06px] ${s.num}`}>{s.value}</div>
        </div>
      ))}
    </div>
  );
}

const years = [2010, 2011, 2012, 2013, 2014, 2015, 2016, 2017, 2018, 2019, 2020, 2021, 2022];

function Panel() {
  return (
    <section className="ml-[3px] mt-6 flex h-[743px] w-[1116px] flex-col rounded-[20px] border border-[#efeff5] bg-white">
      <div className="mt-[16.3px] flex h-9 items-center pl-[26.2px] pr-[26px] text-[17px] font-semibold">
        <span className="mt-[8px] text-[#303030]">Population</span>
        <span className="ml-[17px] mt-[8px] text-[#acacac]">By States</span>
        <button className="ml-auto flex h-9 w-9 items-center justify-center rounded-full bg-[#eeeff5]">
          <span className="h-[1.6px] w-[12px] rounded-full bg-black" />
        </button>
      </div>
      <div className="ml-[23.3px] mt-[9px] h-[2px] w-[1058px] shrink-0 rounded-full bg-[#f3f5f8]" />
      <div className="ml-[271.4px] mt-[25px] flex h-[46px]">
        {years.map((year) => (
          <div key={year} className="w-10 shrink-0">
            <div className="pl-[2.2px] text-sm font-medium leading-5 tracking-[-0.18px]">{year}</div>
            {year === 2021 ? (
              <div className="-ml-px mt-[1px] h-[25px] w-10 rounded-[5px] border-2 border-[#1c5bff] bg-[#9db7ff]" />
            ) : (
              <div className="mt-[2px] h-[23px] w-[38px] rounded-[4px] bg-[#eeeff3]" />
            )}
          </div>
        ))}
      </div>
      <UsMap />
    </section>
  );
}

export default function App() {
  return (
    <div className="flex h-[1262px] w-[1540px] bg-white p-[50px] font-['Inter',sans-serif] text-black [zoom:2.65974]">
      <div className="flex h-[1162px] w-[1440px] overflow-hidden rounded-[30px] bg-[#f9f9f9] shadow-[0_0_50px_rgba(0,0,0,0.1)]">
        <Sidebar />
        <main className="flex-1 pl-[34px] pt-[29px]">
          <Header />
          <div className="mt-[26px] h-px w-[1110px] bg-[#e0e0e0]" />
          <Filters />
          <Stats />
          <Panel />
        </main>
      </div>
    </div>
  );
}
